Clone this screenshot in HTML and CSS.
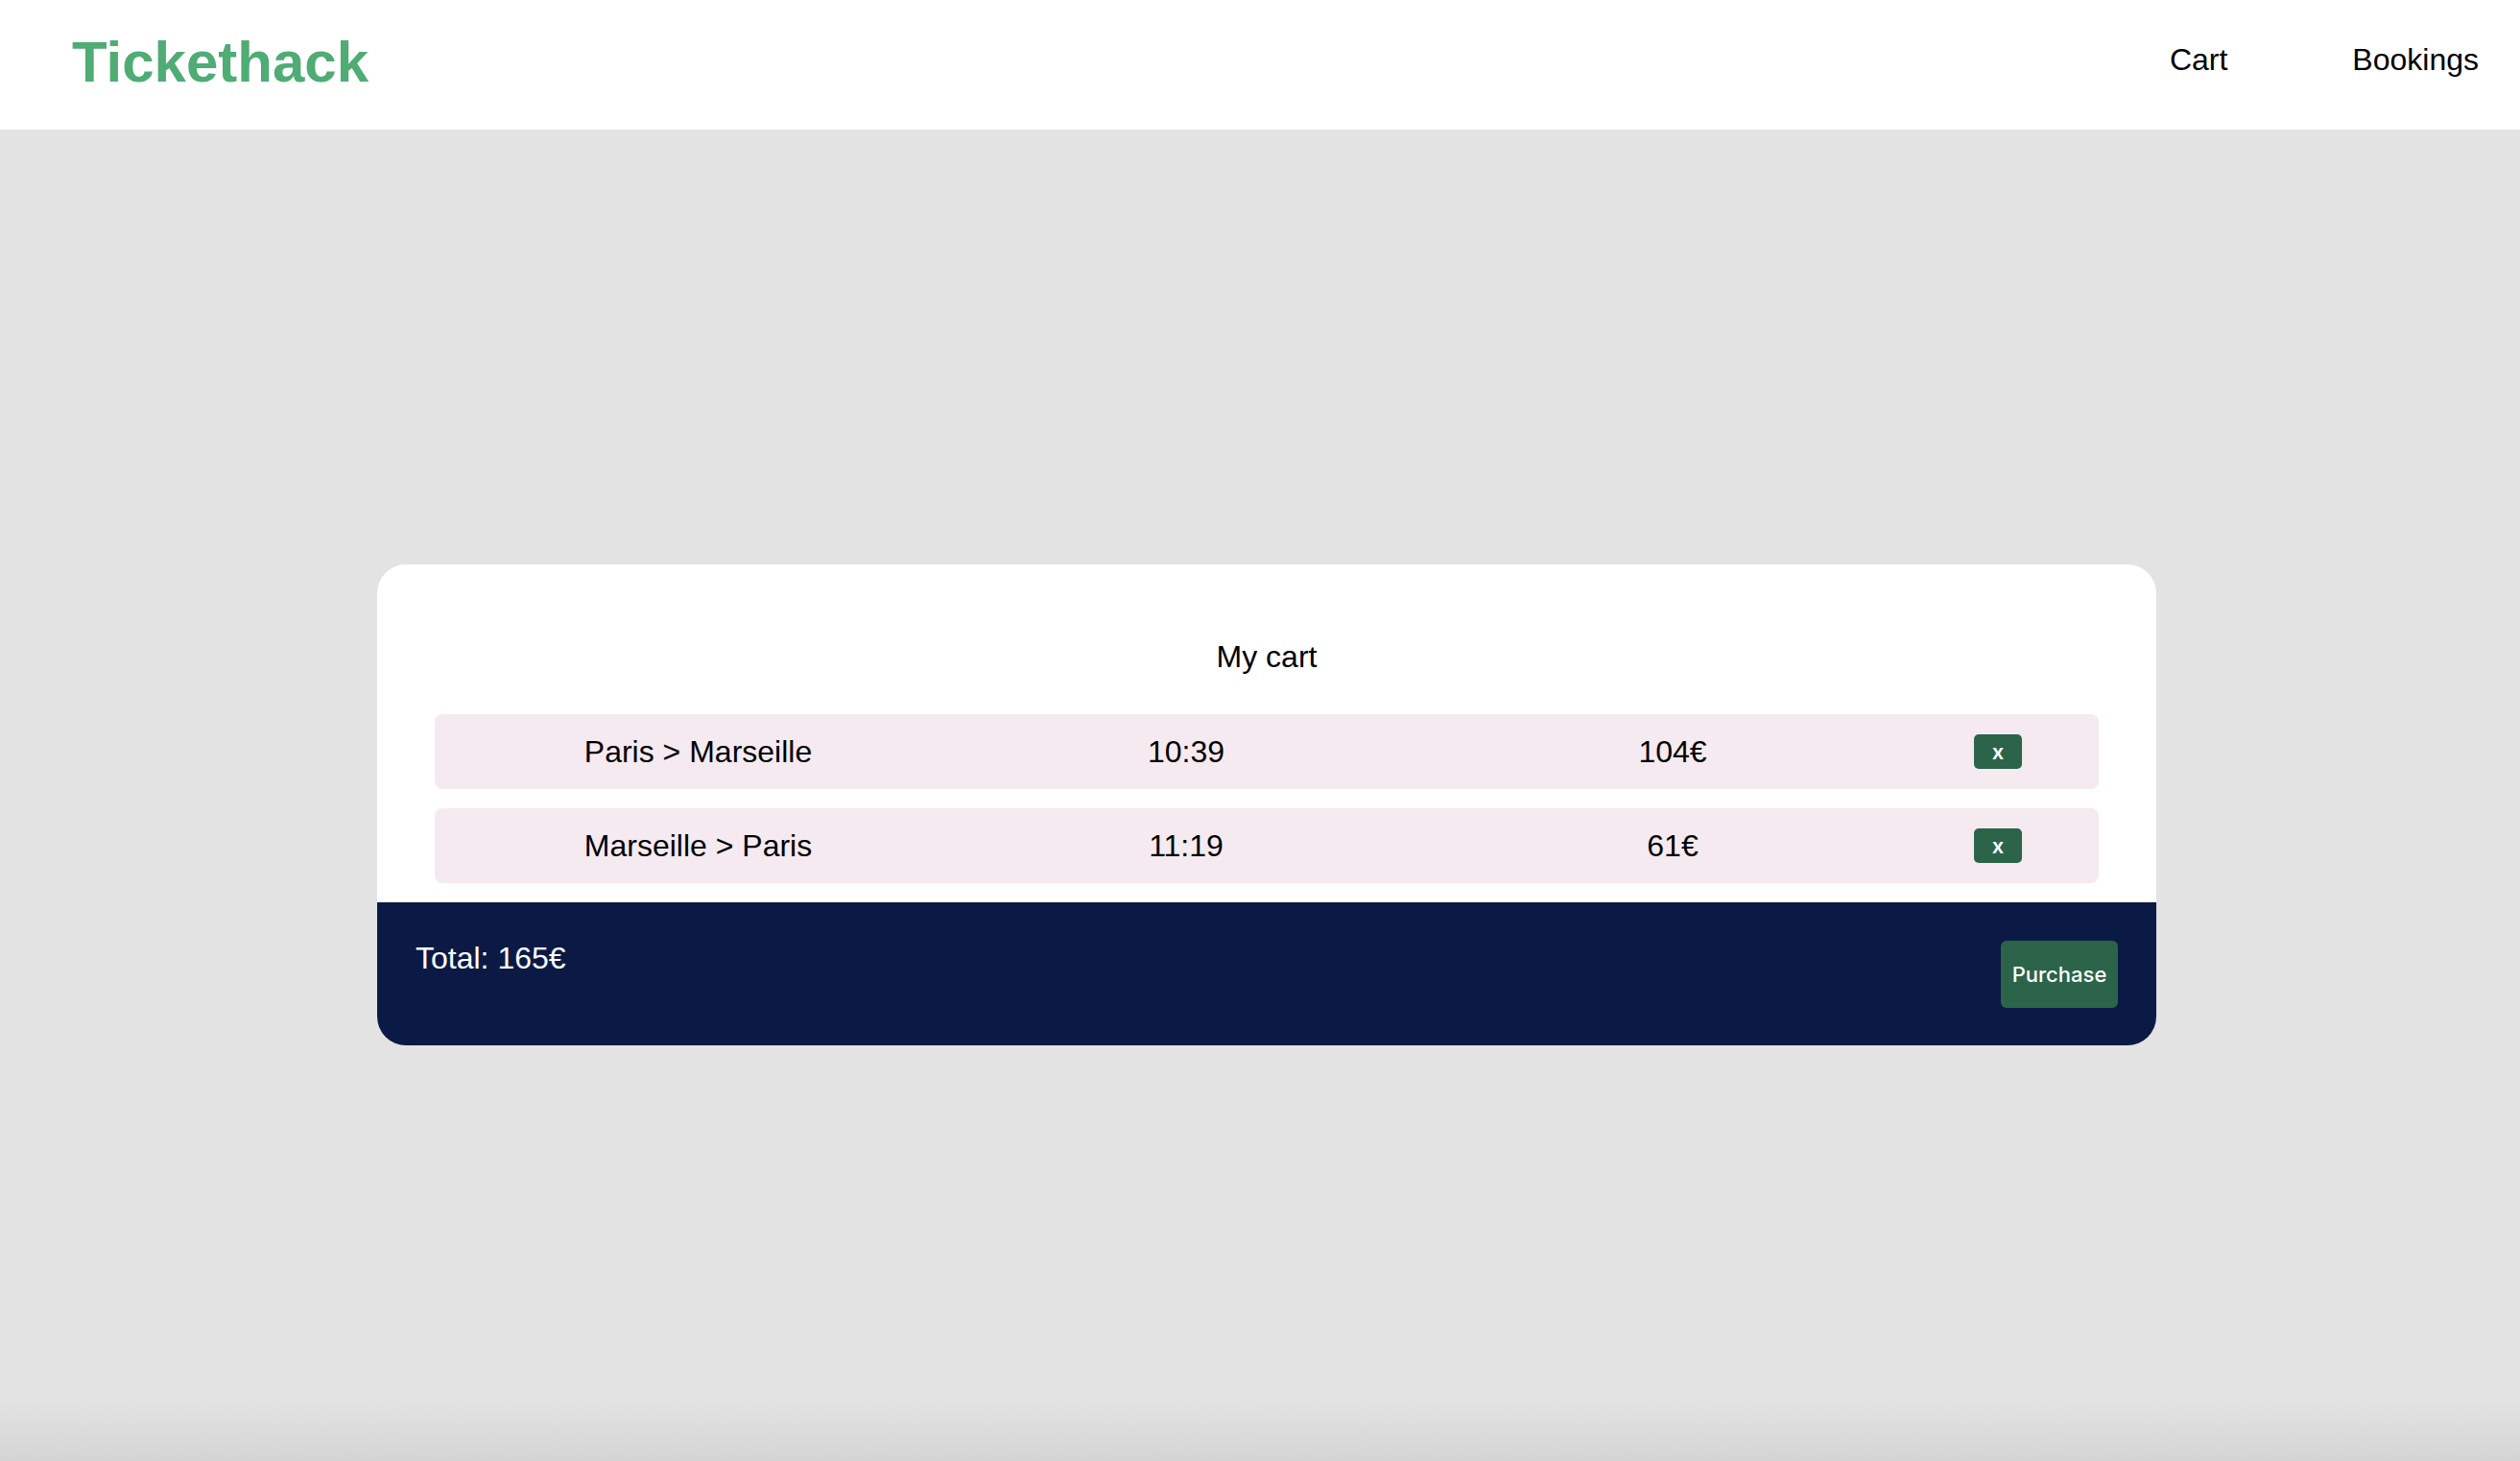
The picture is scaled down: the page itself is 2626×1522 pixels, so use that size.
FILE: index.html
```html
<!DOCTYPE html>
<html lang="en">
<head>
<meta charset="utf-8">
<title>Tickethack - Cart</title>
<link rel="stylesheet" href="styles.css">
</head>
<body>
<header class="header">
  <a class="logo" href="#">Tickethack</a>
  <nav class="nav">
    <a class="nav-link" href="#">Cart</a>
    <a class="nav-link" href="#">Bookings</a>
  </nav>
</header>
<main class="main">
  <section class="card">
    <div class="card-body">
      <h2 class="card-title">My cart</h2>
      <div class="trips">
        <div class="trip">
          <span class="trip-route">Paris &gt; Marseille</span>
          <span class="trip-time">10:39</span>
          <span class="trip-price">104€</span>
          <span class="trip-action"><button class="btn-delete">x</button></span>
        </div>
        <div class="trip">
          <span class="trip-route">Marseille &gt; Paris</span>
          <span class="trip-time">11:19</span>
          <span class="trip-price">61€</span>
          <span class="trip-action"><button class="btn-delete">x</button></span>
        </div>
      </div>
    </div>
    <div class="card-footer">
      <p class="total">Total: 165€</p>
      <button class="btn-purchase">Purchase</button>
    </div>
  </section>
</main>
</body>
</html>
```

FILE: styles.css
```css
html, body {
  margin: 0;
  padding: 0;
}

body {
  min-height: 100vh;
  font-family: "Liberation Sans", Arial, Helvetica, sans-serif;
  color: #000;
  background: linear-gradient(to bottom, #e3e3e3 0, #e3e3e3 calc(100% - 64px), #d4d4d4 100%);
}

.header {
  height: 135px;
  box-sizing: border-box;
  background: #fff;
  display: flex;
  align-items: center;
  justify-content: space-between;
  padding: 0 43px 7px 75px;
}

.logo {
  font-size: 60px;
  font-weight: bold;
  color: #4fac74;
  text-decoration: none;
  line-height: 69px;
}

.nav {
  display: flex;
  gap: 130px;
  margin-bottom: 3px;
}

.nav-link {
  font-size: 32px;
  color: #000;
  text-decoration: none;
  line-height: 37px;
}

.main {
  display: flex;
  justify-content: center;
  padding: 453px 0 0 14px;
}

.card {
  width: 1854px;
  background: #fff;
  border-radius: 30px;
  overflow: hidden;
}

.card-body {
  padding: 78px 60px 20px;
}

.card-title {
  margin: 0 0 41px;
  font-size: 32px;
  font-weight: normal;
  line-height: 37px;
  text-align: center;
}

.trips {
  display: flex;
  flex-direction: column;
  gap: 20px;
}

.trip {
  height: 78px;
  background: #f5eaf0;
  border-radius: 8px;
  display: grid;
  grid-template-columns: 549px 468px 546px 132px;
  align-items: center;
  font-size: 32px;
  line-height: 37px;
}

.trip-route,
.trip-time,
.trip-price,
.trip-action {
  text-align: center;
}

.trip-action {
  display: flex;
  justify-content: center;
}

.btn-delete {
  width: 50px;
  height: 36px;
  padding: 0;
  border: none;
  border-radius: 5px;
  background: #2b6449;
  color: #fff;
  font-family: Inter, "Noto Sans", sans-serif;
  font-size: 22px;
  font-weight: 600;
  line-height: 1;
  cursor: pointer;
}

.card-footer {
  background: #0b1a45;
  display: flex;
  justify-content: space-between;
  align-items: flex-start;
  padding: 40px 40px 39px;
}

.total {
  margin: 0;
  color: #fff;
  font-size: 32px;
  line-height: 37px;
}

.btn-purchase {
  height: 70px;
  width: 122px;
  padding: 0;
  border: none;
  border-radius: 6px;
  background: #2b6449;
  color: #fff;
  font-family: Inter, "Noto Sans", sans-serif;
  font-size: 22px;
  font-weight: 500;
  cursor: pointer;
}
```
